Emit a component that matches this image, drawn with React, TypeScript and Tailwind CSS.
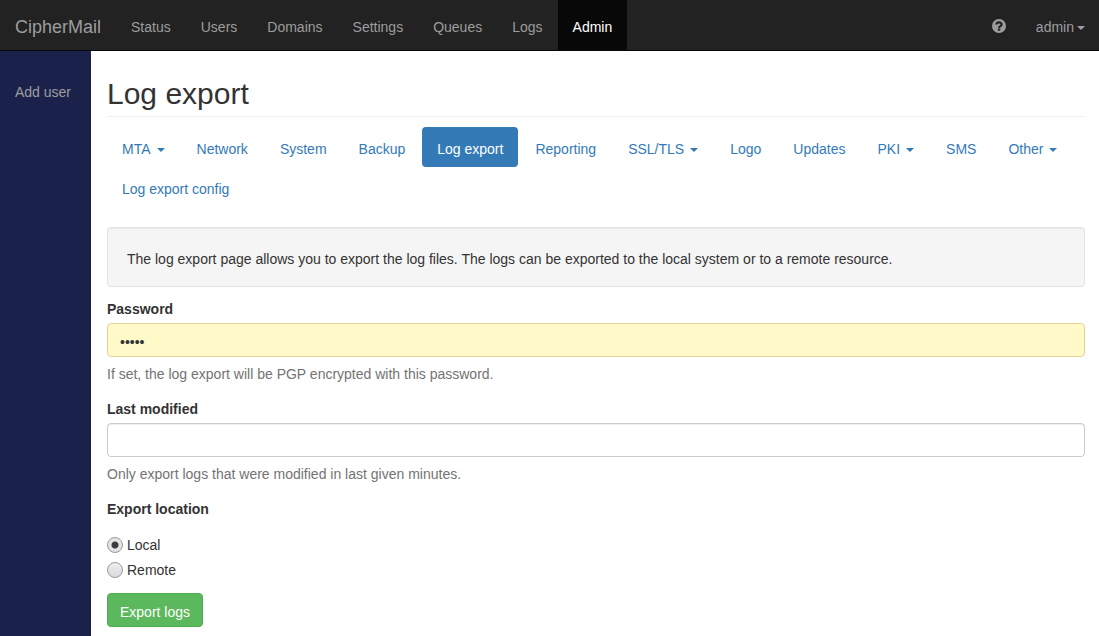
import { useState } from "react";
import type { ReactNode } from "react";

interface NavItem {
  label: string;
  active?: boolean;
  dropdown?: boolean;
}

const mainItems: NavItem[] = [
  { label: "Status" },
  { label: "Users" },
  { label: "Domains" },
  { label: "Settings" },
  { label: "Queues" },
  { label: "Logs" },
  { label: "Admin", active: true },
];

const adminItems: NavItem[] = [
  { label: "MTA", dropdown: true },
  { label: "Network" },
  { label: "System" },
  { label: "Backup" },
  { label: "Log export", active: true },
  { label: "Reporting" },
  { label: "SSL/TLS", dropdown: true },
  { label: "Logo" },
  { label: "Updates" },
  { label: "PKI", dropdown: true },
  { label: "SMS" },
  { label: "Other", dropdown: true },
  { label: "Log export config" },
];

const locations = ["Local", "Remote"];

function Caret() {
  return (
    <svg viewBox="0 0 8 4" className="inline-block h-1 w-2 align-middle" fill="currentColor" aria-hidden="true">
      <path d="M0 0h8L4 4z" />
    </svg>
  );
}

function HelpIcon() {
  return (
    <svg viewBox="0 0 14 14" className="h-3.5 w-3.5" aria-hidden="true">
      <circle cx="7" cy="7" r="7" fill="currentColor" />
      <path
        d="M4.4 5.6C4.4 2.6 9.6 2.6 9.6 5.4C9.6 7.2 7.1 7 7.1 8.9"
        fill="none"
        stroke="#222"
        strokeWidth="2.2"
      />
      <path d="M5.9 9.6h2.4v2.1H5.9z" fill="#222" />
    </svg>
  );
}

function Navbar() {
  return (
    <nav className="flex justify-between border-b border-[#080808] bg-[#222] text-[#9d9d9d]">
      <div className="flex">
        <a href="#home" className="px-[15px] pt-[15px] pb-[11px] text-lg leading-6">
          CipherMail
        </a>
        <ul className="flex">
          {mainItems.map((item) => (
            <li key={item.label}>
              <a
                href="#main"
                className={`block px-[15px] pt-[15px] pb-[11px] ${item.active ? "bg-[#080808] text-white" : ""}`}
              >
                {item.label}
              </a>
            </li>
          ))}
        </ul>
      </div>
      <div className="flex pr-3.5">
        <a href="#help" aria-label="Help" className="flex items-center px-[15px] pt-0.5">
          <HelpIcon />
        </a>
        <a href="#account" className="pt-[15px] pb-[11px] pl-[15px]">
          admin
          <span className="ml-[3px]">
            <Caret />
          </span>
        </a>
      </div>
    </nav>
  );
}

function AdminTabs() {
  return (
    <ul className="mt-2.5 flex flex-wrap gap-x-0.5">
      {adminItems.map((item) => (
        <li key={item.label}>
          <a
            href="#tab"
            className={`block rounded px-[15px] pt-2.5 pb-1.5 ${
              item.active ? "bg-[#337ab7] text-white" : "text-[#337ab7]"
            }`}
          >
            {item.label}
            {item.dropdown && (
              <span className="ml-1.5">
                <Caret />
              </span>
            )}
          </a>
        </li>
      ))}
    </ul>
  );
}

interface FieldProps {
  id: string;
  label: string;
  help: string;
  children: ReactNode;
}

function Field({ id, label, help, children }: FieldProps) {
  return (
    <div className="flex flex-col">
      <label htmlFor={id} className="mb-0.5 font-bold">
        {label}
      </label>
      {children}
      <p className="mt-[5px] text-[#737373]">{help}</p>
    </div>
  );
}

function App() {
  const [password, setPassword] = useState("admin");
  const [minutes, setMinutes] = useState("");
  const [location, setLocation] = useState("Local");

  return (
    <div className="flex min-h-screen flex-col bg-white font-['Liberation_Sans',Arial,sans-serif] text-sm leading-6 text-[#333]">
      <Navbar />
      <div className="flex flex-1">
        <aside className="w-[91px] shrink-0 bg-[#1a224c] px-[15px] pt-[29px]">
          <a href="#add-user" className="whitespace-nowrap text-[#9d9d9d]">
            Add user
          </a>
        </aside>

        <main className="min-w-0 flex-1 pt-[25px] pr-3.5 pb-2 pl-4">
          <h1 className="border-b border-[#eee] pb-1 text-3xl leading-9">Log export</h1>
          <AdminTabs />

          <div className="mt-5 rounded-sm border border-[#e3e3e3] bg-[#f5f5f5] px-[19px] pt-[19px] pb-[15px] shadow-[inset_0_1px_1px_rgba(0,0,0,0.05)]">
            The log export page allows you to export the log files. The logs can be exported to the
            local system or to a remote resource.
          </div>

          <form className="mt-2.5 flex flex-col gap-[11px]" onSubmit={(e) => e.preventDefault()}>
            <Field
              id="password"
              label="Password"
              help="If set, the log export will be PGP encrypted with this password."
            >
              <input
                id="password"
                type="password"
                value={password}
                onChange={(e) => setPassword(e.target.value)}
                className="h-[34px] w-full rounded border border-[#e8d09c] bg-[#fffac8] px-3 pt-1"
              />
            </Field>

            <Field
              id="minutes"
              label="Last modified"
              help="Only export logs that were modified in last given minutes."
            >
              <input
                id="minutes"
                type="text"
                value={minutes}
                onChange={(e) => setMinutes(e.target.value)}
                className="h-[34px] w-full rounded border border-[#ccc] bg-white px-3 pt-1 shadow-[inset_0_1px_1px_rgba(0,0,0,0.075)]"
              />
            </Field>

            <fieldset>
              <legend className="mb-3 font-bold">Export location</legend>
              <div className="flex flex-col items-start gap-px">
                {locations.map((name) => (
                  <label key={name} className="flex items-center gap-1">
                    <input
                      type="radio"
                      name="location"
                      value={name}
                      checked={location === name}
                      onChange={() => setLocation(name)}
                      className="h-4 w-4 appearance-none rounded-full border border-[#999] bg-linear-to-b from-[#eee] to-[#dadada] checked:bg-[radial-gradient(circle,#3c3c3c_3px,#e4e4e4_4px)]"
                    />
                    {name}
                  </label>
                ))}
              </div>
            </fieldset>

            <button
              type="submit"
              className="self-start rounded border border-[#4cae4c] bg-[#5cb85c] px-3 pt-1.5 pb-0.5 text-white"
            >
              Export logs
            </button>
          </form>
        </main>
      </div>
    </div>
  );
}

export default App;
